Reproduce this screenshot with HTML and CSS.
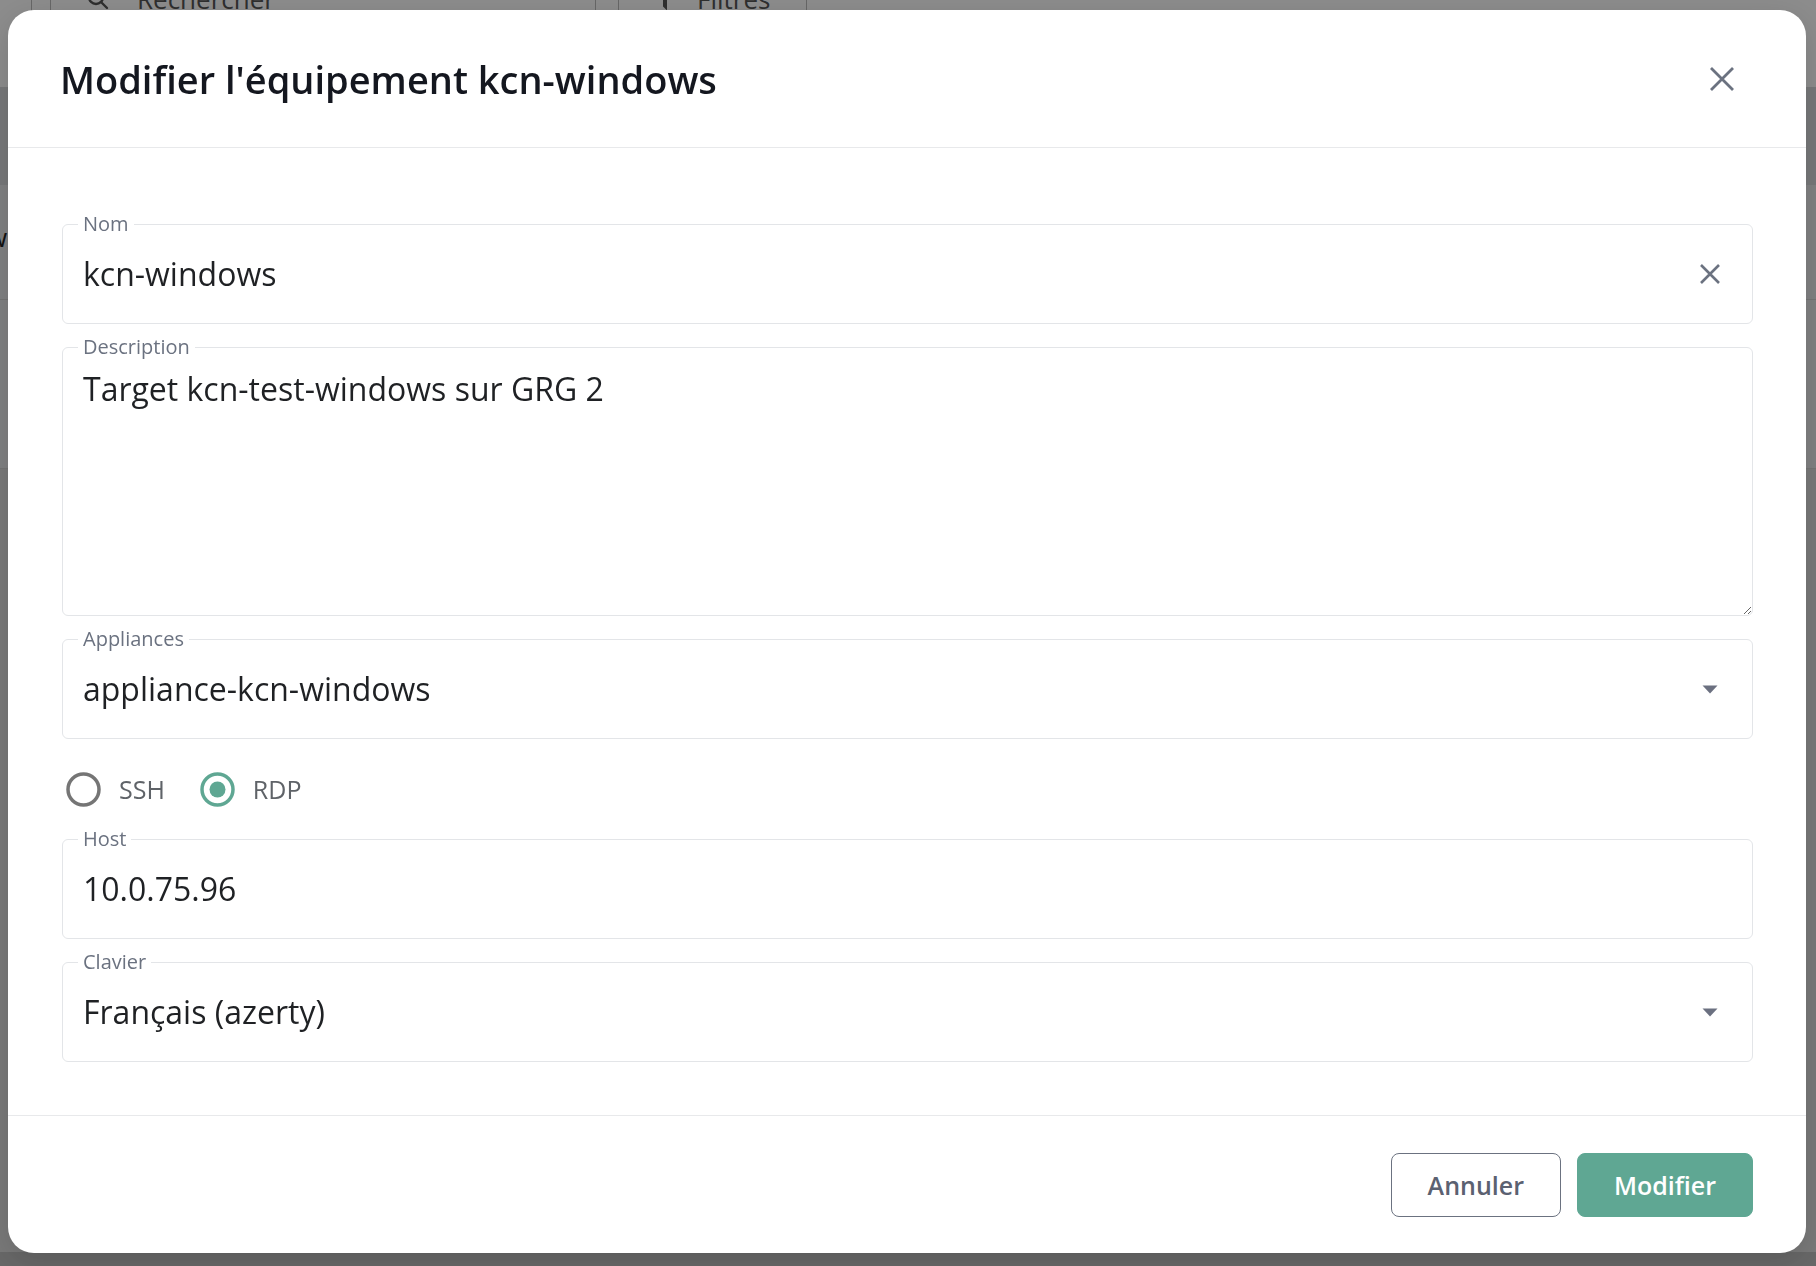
FILE: index.html
```html
<!DOCTYPE html>
<html lang="fr">
<head>
  <meta charset="UTF-8" />
  <meta name="viewport" content="width=device-width, initial-scale=1.0"/>
  <title>Modifier l'équipement</title>
  <link rel="stylesheet" href="styles.css">
</head>
<body>
  <!-- page behind the dialog -->
  <div class="page">
    <div class="toolbar">
      <div class="sidebar-edge"></div>
      <div class="search">
        <svg width="22" height="22" viewBox="0 0 22 22"><circle cx="9" cy="9" r="7" fill="none" stroke="#555" stroke-width="2.4"/><path d="M14 14 L20 20" stroke="#555" stroke-width="2.4" stroke-linecap="round"/></svg>
        <span>Rechercher</span>
      </div>
      <div class="filters">
        <svg width="12" height="22" viewBox="0 0 12 22"><path d="M2 2 H10 L7 9 V20 L5 18 V9 Z" fill="none" stroke="#555" stroke-width="2"/></svg>
        <span>Filtres</span>
      </div>
    </div>
    <div class="table">
      <div class="table-head"></div>
      <div class="table-row"><span class="cell-text">w</span></div>
      <div class="table-row tall"></div>
      <div class="table-rest"></div>
    </div>
  </div>

  <div class="overlay">
    <div class="modal">
      <div class="modal-header">
        <h1>Modifier l'équipement kcn-windows</h1>
        <button type="button" class="icon-btn" aria-label="Fermer">
          <svg width="26" height="26" viewBox="0 0 26 26"><path d="M2 2 L24 24 M24 2 L2 24" stroke="#6b7280" stroke-width="2.8"/></svg>
        </button>
      </div>

      <form class="modal-body">
        <fieldset class="field">
          <legend>Nom</legend>
          <div class="field-row">
            <input type="text" value="kcn-windows">
            <button type="button" class="icon-btn" aria-label="Effacer">
              <svg width="22" height="22" viewBox="0 0 22 22"><path d="M2 2 L20 20 M20 2 L2 20" stroke="#6b7280" stroke-width="2.6"/></svg>
            </button>
          </div>
        </fieldset>

        <fieldset class="field">
          <legend>Description</legend>
          <textarea>Target kcn-test-windows sur GRG 2</textarea>
        </fieldset>

        <fieldset class="field">
          <legend>Appliances</legend>
          <div class="field-row">
            <span class="select-value">appliance-kcn-windows</span>
            <svg width="22" height="22" viewBox="0 0 22 22"><path d="M3.5 7.5 H18.5 L11 15.5 Z" fill="#6b7080"/></svg>
          </div>
        </fieldset>

        <div class="radio-group">
          <label class="radio">
            <svg width="35" height="35" viewBox="0 0 35 35"><circle cx="17.5" cy="17.5" r="15.5" fill="none" stroke="#757575" stroke-width="3.5"/></svg>
            <span>SSH</span>
          </label>
          <label class="radio">
            <svg width="35" height="35" viewBox="0 0 35 35"><circle cx="17.5" cy="17.5" r="15.5" fill="none" stroke="#5fa793" stroke-width="3.5"/><circle cx="17.5" cy="17.5" r="8" fill="#5fa793"/></svg>
            <span>RDP</span>
          </label>
        </div>

        <fieldset class="field">
          <legend>Host</legend>
          <div class="field-row">
            <input type="text" value="10.0.75.96">
          </div>
        </fieldset>

        <fieldset class="field">
          <legend>Clavier</legend>
          <div class="field-row">
            <span class="select-value">Français (azerty)</span>
            <svg width="22" height="22" viewBox="0 0 22 22"><path d="M3.5 7.5 H18.5 L11 15.5 Z" fill="#6b7080"/></svg>
          </div>
        </fieldset>
      </form>

      <div class="modal-footer">
        <button type="button" class="btn btn-outline">Annuler</button>
        <button type="button" class="btn btn-primary">Modifier</button>
      </div>
    </div>
  </div>
</body>
</html>
```

FILE: styles.css
```css
body {
  margin: 0;
  width: 1816px;
  height: 1266px;
  overflow: hidden;
  font-family: "Open Sans", "Noto Sans", sans-serif;
  background: #e0e1e3;
  color: #1f2124;
}

/* background page */
.page {
  height: 100%;
  display: flex;
  flex-direction: column;
}
.toolbar {
  height: 87px;
  flex-shrink: 0;
  background: #fff;
  display: flex;
  align-items: flex-start;
}
.sidebar-edge {
  width: 31px;
  height: 100%;
  border-right: 1px solid #bbb;
  margin-right: 18px;
}
.search, .filters {
  height: 60px;
  margin-top: -31px;
  border: 1px solid #bbb;
  border-top: none;
  display: flex;
  align-items: center;
  font-size: 26px;
  color: #555;
}
.search {
  width: 508px;
  padding-left: 36px;
  gap: 28px;
}
.filters {
  width: 147px;
  margin-left: 22px;
  padding-left: 40px;
  gap: 26px;
}
.table {
  flex: 1;
  display: flex;
  flex-direction: column;
}
.table-head {
  height: 98px;
  background: #d8dadd;
}
.table-row {
  height: 115px;
  background: #e9eaec;
  border-bottom: 1px solid #d4d4d4;
  padding-top: 34px;
  box-sizing: border-box;
}
.table-row.tall {
  height: 169px;
}
.cell-text {
  display: inline-block;
  margin-left: -13px;
  font-size: 26px;
  color: #222;
}
.table-rest {
  flex: 1;
  background: #dcdcdc;
  border-bottom: 14px solid #bdbdbd;
}

/* dialog */
.overlay {
  position: fixed;
  inset: 0;
  background: rgba(0, 0, 0, 0.45);
  display: flex;
  padding: 10px 10px 13px 8px;
  box-sizing: border-box;
}
.modal {
  flex: 1;
  display: flex;
  flex-direction: column;
  background: #fff;
  border-radius: 26px;
  box-shadow: 0 8px 30px rgba(0, 0, 0, 0.15);
}
.modal-header {
  height: 137px;
  flex-shrink: 0;
  display: flex;
  align-items: center;
  justify-content: space-between;
  padding: 0 71px 0 52px;
}
.modal-header h1 {
  margin: 0;
  font-size: 38px;
  font-weight: 600;
  color: #14171f;
}
.icon-btn {
  background: none;
  border: none;
  padding: 0;
  display: flex;
  cursor: pointer;
}

.modal-body {
  flex: 1;
  margin: 0;
  display: flex;
  flex-direction: column;
  gap: 11px;
  padding: 64px 53px 53px 54px;
  border-top: 1px solid #e8e9eb;
  border-bottom: 1px solid #e8e9eb;
}
.field {
  margin: 0;
  padding: 0;
  min-width: 0;
  border: 1px solid #e3e5e8;
  border-radius: 6px;
}
.field legend {
  font-size: 20px;
  line-height: 24px;
  padding: 0 5px;
  margin-left: 15px;
  color: #6b7280;
}
.field-row {
  height: 75px;
  display: flex;
  align-items: center;
  justify-content: space-between;
  padding: 0 31px 12px 20px;
}
.field-row input {
  flex: 1;
  min-width: 0;
  border: none;
  outline: none;
  padding: 0;
  background: transparent;
  font-family: inherit;
  font-size: 32px;
  color: #1f2124;
}
.select-value {
  font-size: 32px;
  color: #1f2124;
}
.field textarea {
  display: block;
  width: 100%;
  height: 256px;
  box-sizing: border-box;
  padding: 10px 20px;
  border: none;
  outline: none;
  background: transparent;
  font-family: inherit;
  font-size: 32px;
  line-height: 40px;
  color: #1f2124;
  resize: vertical;
  border-radius: 0 0 6px 6px;
}

.radio-group {
  height: 40px;
  display: flex;
  align-items: center;
  gap: 35px;
  margin: 19px 0 7px 4px;
}
.radio {
  display: flex;
  align-items: center;
  gap: 18px;
  font-size: 25px;
  color: #5f6368;
}

.modal-footer {
  flex-shrink: 0;
  display: flex;
  justify-content: flex-end;
  gap: 16px;
  padding: 37px 53px 36px;
}
.btn {
  height: 64px;
  padding: 0 36px;
  font-family: inherit;
  font-size: 25px;
  font-weight: 600;
  border-radius: 8px;
  cursor: pointer;
}
.btn-outline {
  background: #fff;
  border: 1px solid #6b7280;
  color: #5b6171;
}
.btn-primary {
  background: #5fa793;
  border: 1px solid #5fa793;
  color: #fff;
}
```
